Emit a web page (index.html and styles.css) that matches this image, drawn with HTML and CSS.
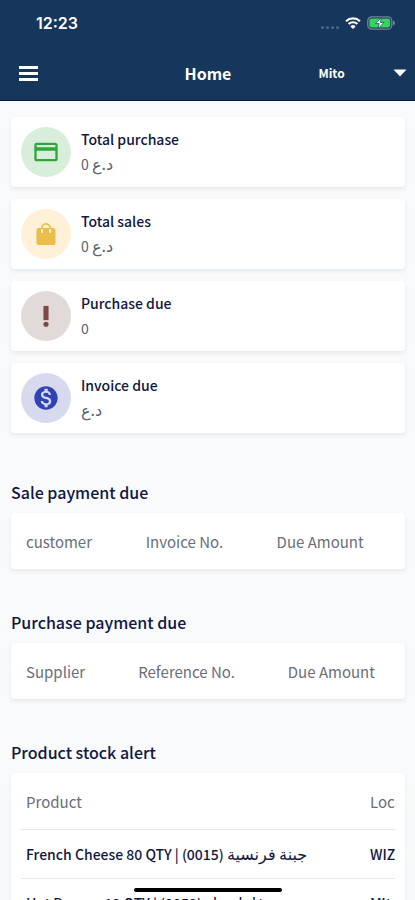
FILE: index.html
```html
<!DOCTYPE html>
<html lang="en">
<head>
<meta charset="utf-8">
<meta name="viewport" content="width=device-width, initial-scale=1">
<title>Home</title>
<link rel="stylesheet" href="styles.css">
</head>
<body>
<div class="app">
  <header class="header">
    <div class="status">
      <span class="clock">12:23</span>
      <div class="indicators">
        <span class="signal"><i></i><i></i><i></i><i></i></span>
        <svg class="wifi" viewBox="0 0 16 12" aria-hidden="true">
          <path d="M1 4.2a10.2 10.2 0 0 1 14 0M3.6 7a6.4 6.4 0 0 1 8.8 0" fill="none" stroke="#fff" stroke-width="2.2"/>
          <path d="M8 12 5.4 9.4a3.7 3.7 0 0 1 5.2 0z" fill="#fff"/>
        </svg>
        <svg class="battery" viewBox="0 0 28 14" aria-hidden="true">
          <rect x=".8" y=".8" width="24" height="12.4" rx="4" fill="none" stroke="#6d8798" stroke-width="1.3"/>
          <path d="M26 4.6q2 .8 2 2.4t-2 2.4z" fill="#6d8798"/>
          <rect x="2.4" y="2.4" width="20.8" height="9.2" rx="2.4" fill="#35d45c"/>
          <path d="M14.4 1.8 8.6 7.6h3.6l-1 4.8L17 6.4h-3.6z" fill="#fff" stroke="#17365b" stroke-width=".7"/>
        </svg>
      </div>
    </div>
    <div class="toolbar">
      <button class="menu" type="button" aria-label="Menu"><i></i><i></i><i></i></button>
      <h1>Home</h1>
      <div class="location">
        <select aria-label="Location"><option>Mito</option><option>WIZ</option></select>
        <svg viewBox="0 0 14 8" aria-hidden="true"><path d="M.5.5h13L7 7.5z" fill="#fff"/></svg>
      </div>
    </div>
  </header>

  <main class="content">
    <section class="stats" aria-label="Totals">
      <article class="card stat">
        <span class="badge green"><svg viewBox="0 0 24 24" aria-hidden="true"><path fill="currentColor" d="M20 4H4c-1.110 0-2 .89-2 2v12c0 1.110.89 2 2 2h16c1.110 0 2-.89 2-2V6c0-1.110-.89-2-2-2zm0 14H4v-7h16v7zm0-10H4V6h16v2z"/></svg></span>
        <div><h2>Total purchase</h2><p>0 <bdi>د.ع</bdi></p></div>
      </article>
      <article class="card stat">
        <span class="badge amber"><svg viewBox="0 0 24 24" aria-hidden="true"><path fill="currentColor" fill-rule="evenodd" d="M19.500 6H17a5 5 0 0 0-10 0H4.500A2 2 0 0 0 2.500 8v13a2 2 0 0 0 2 2h15a2 2 0 0 0 2-2V8a2 2 0 0 0-2-2zM12 2.800A3.200 3.200 0 0 1 15.200 6H8.800A3.200 3.200 0 0 1 12 2.800z"/><path d="M8 8v2M16 8v2" stroke="#fff1d8" stroke-width="2" stroke-linecap="round"/></svg></span>
        <div><h2>Total sales</h2><p>0 <bdi>د.ع</bdi></p></div>
      </article>
      <article class="card stat">
        <span class="badge brown"><svg viewBox="0 0 24 24" aria-hidden="true"><path fill="currentColor" d="M9.200 1h5.600v15.500H9.200z"/><circle cx="12" cy="21" r="2.800" fill="currentColor"/></svg></span>
        <div><h2>Purchase due</h2><p>0</p></div>
      </article>
      <article class="card stat">
        <span class="badge blue"><svg viewBox="0 0 24 24" aria-hidden="true"><path fill="currentColor" d="M12 2C6.480 2 2 6.480 2 12s4.480 10 10 10 10-4.480 10-10S17.520 2 12 2zm1.410 16.090V20h-2.670v-1.930c-1.710-.36-3.160-1.460-3.270-3.400h1.960c.1 1.050.82 1.870 2.650 1.870 1.960 0 2.400-.98 2.400-1.590 0-.83-.44-1.610-2.670-2.140-2.480-.6-4.180-1.620-4.180-3.670 0-1.720 1.390-2.840 3.110-3.210V4h2.670v1.950c1.860.45 2.790 1.860 2.850 3.390H14.300c-.05-1.110-.64-1.870-2.220-1.870-1.500 0-2.400.68-2.400 1.640 0 .84.65 1.390 2.670 1.910s4.180 1.390 4.180 3.910c-.01 1.830-1.380 2.830-3.120 3.160z"/></svg></span>
        <div><h2>Invoice due</h2><p><bdi>د.ع</bdi></p></div>
      </article>
    </section>

    <section class="list">
      <h2 id="sale">Sale payment due</h2>
      <div class="card panel">
        <table class="sale" aria-labelledby="sale">
          <tr><th>customer</th><th>Invoice No.</th><th>Due Amount</th></tr>
        </table>
      </div>
    </section>

    <section class="list">
      <h2 id="purchase">Purchase payment due</h2>
      <div class="card panel">
        <table class="purchase" aria-labelledby="purchase">
          <tr><th>Supplier</th><th>Reference No.</th><th>Due Amount</th></tr>
        </table>
      </div>
    </section>

    <section class="list">
      <h2 id="stock">Product stock alert</h2>
      <div class="card panel">
        <div class="scroller">
          <table class="stock" aria-labelledby="stock">
            <thead><tr><th>Product</th><th>Location</th></tr></thead>
            <tbody>
              <tr><td>French Cheese 80 QTY | (0015) <bdi>جبنة فرنسية</bdi></td><td>WIZ</td></tr>
              <tr><td>Hot Pepper 12 QTY | (0052) <bdi>فلفل حار</bdi></td><td>Mito</td></tr>
            </tbody>
          </table>
        </div>
      </div>
    </section>
  </main>
  <div class="home-indicator"></div>
</div>
</body>
</html>
```
FILE: styles.css
```css
* { box-sizing: border-box; }

body {
  margin: 0;
  background: #f8fafc;
  color: #111742;
  font: 16px/24px "Noto Sans CJK SC", "Noto Sans", "DejaVu Sans", sans-serif;
}

h1, h2, p { margin: 0; font-weight: 500; }

.app {
  display: flex;
  flex-direction: column;
  height: 100vh;
  overflow: hidden;
}

.header {
  flex: none;
  background: #17365b;
  color: #fff;
  border-bottom: 1px solid #0b1440;
}

.status {
  display: flex;
  align-items: center;
  justify-content: space-between;
  height: 46px;
  padding: 0 20px 0 36px;
}
.clock { font: 600 16px/20px Inter, sans-serif; }
.indicators { display: flex; align-items: center; gap: 6px; }
.signal { display: flex; gap: 2px; padding-top: 8px; }
.signal i { width: 3px; height: 3px; border-radius: 50%; background: #4c6885; }
.wifi { width: 16px; height: 12px; }
.battery { width: 28px; height: 14px; }

.toolbar {
  display: grid;
  grid-template-columns: 1fr auto 1fr;
  align-items: center;
  height: 54px;
  padding: 0 18px 0 19px;
}
.menu {
  display: flex;
  flex-direction: column;
  gap: 3px;
  width: 19px;
  padding: 0;
  border: 0;
  background: none;
}
.menu i { width: 100%; height: 3px; background: #fff; }
.toolbar h1 { font-size: 16px; font-weight: 700; }
.location {
  display: grid;
  align-items: center;
  margin: 0 -10px 0 87px;
}
.location select, .location svg { grid-area: 1 / 1; }
.location select {
  width: 100%;
  padding: 0;
  border: 0;
  background: none;
  color: #fff;
  font: 700 12px/20px "Noto Sans CJK SC", sans-serif;
  appearance: none;
}
.location svg { width: 14px; height: 8px; justify-self: end; pointer-events: none; }

.content {
  flex: 1;
  min-height: 0;
  padding: 16px 10px 0 11px;
  overflow-y: auto;
  scrollbar-width: none;
}

.card {
  background: #fff;
  border-radius: 4px;
  box-shadow: 0 2px 4px rgb(30 50 70 / 9%);
}
.stats { display: grid; gap: 12px; }
.stat {
  display: flex;
  align-items: center;
  gap: 10px;
  height: 70px;
  padding: 0 10px;
}
.stat h2 { font-size: 14px; line-height: 24px; }
.stat p { color: #59606e; font-size: 14px; line-height: 26px; font-weight: 400; }
.stat bdi { font-size: 16px; line-height: 20px; }

.badge {
  display: grid;
  place-items: center;
  width: 50px;
  height: 50px;
  border-radius: 50%;
}
.badge svg { width: 28px; height: 28px; }
.green { background: #d8eeda; color: #31a63c; }
.amber { background: #fff1d8; color: #edbd4c; }
.amber svg { width: 24px; height: 24px; }
.brown { background: #e1dad8; color: #7c4a40; }
.brown svg { width: 22px; height: 22px; }
.blue { background: #d7daef; color: #3043b4; }

.list { margin-top: 40px; }
.list h2 { font-size: 16px; line-height: 26px; margin-bottom: 8px; }
.stats + .list { margin-top: 46px; }

.panel { padding: 0 10px; }
.scroller { overflow-x: auto; scrollbar-width: none; }
table { width: 100%; border-collapse: collapse; table-layout: fixed; }
th, td { height: 49px; padding: 0 5px; text-align: left; white-space: nowrap; }
th { height: 56px; padding-top: 2px; color: #6a6d7c; font-size: 15px; font-weight: 400; }
td { border-top: 1px solid #e7e9ec; font-size: 14px; font-weight: 500; line-height: 20px; }
td bdi { font-size: 16px; font-weight: 400; line-height: 16px; }
.sale th:nth-child(1) { width: 32%; }
.sale th:nth-child(2) { width: 35%; }
.purchase th:nth-child(1) { width: 30%; }
.purchase th:nth-child(2) { width: 40%; }
.stock { width: 500px; }
.stock th:first-child { width: 344px; }

.home-indicator {
  position: fixed;
  bottom: 8px;
  left: 50%;
  width: 148px;
  height: 4px;
  border-radius: 2px;
  background: #000;
  transform: translateX(-50%);
}
```
